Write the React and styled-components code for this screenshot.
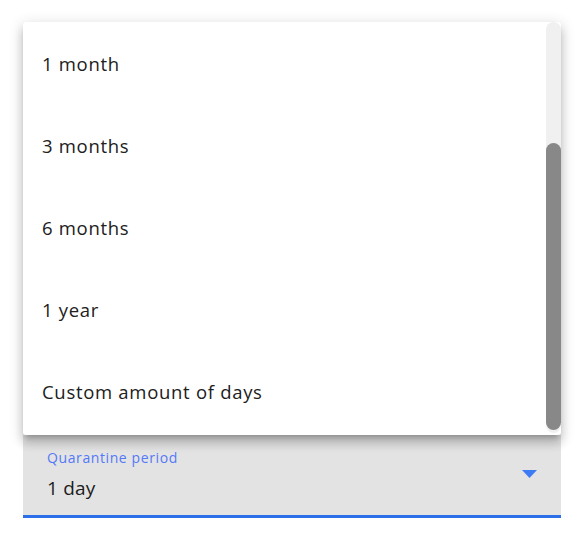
import React, { useState } from 'react'
import styled, { createGlobalStyle } from 'styled-components'

const GlobalStyle = createGlobalStyle`
  body {
    margin: 0;
    background: #ffffff;
    font-family: 'Open Sans', 'Noto Sans', sans-serif;
  }
`

const Page = styled.div`
  width: 580px;
  height: 533px;
  padding: 22px 0 0 23px;
  box-sizing: border-box;
`

const Select = styled.div`
  width: 538px;
  display: flex;
  flex-direction: column;
`

const Menu = styled.div`
  position: relative;
  z-index: 2;
  height: 413px;
  display: flex;
  background: #ffffff;
  border-radius: 3px;
  box-shadow: 0px 5px 5px -3px rgba(0, 0, 0, 0.2),
    0px 8px 10px 1px rgba(0, 0, 0, 0.14),
    0px 3px 14px 2px rgba(0, 0, 0, 0.12);
  overflow: hidden;
`

const List = styled.ul`
  flex: 1;
  margin: 0;
  padding: 0;
  list-style: none;
`

const Option = styled.li`
  height: 82px;
  display: flex;
  align-items: center;
  padding-left: 19px;
  font-size: 18.5px;
  letter-spacing: 0.7px;
  color: #202020;
  cursor: pointer;
`

const Track = styled.div`
  width: 15px;
  height: 411px;
  background: #f0f0f0;
  border-radius: 8px;
  display: flex;
  flex-direction: column;
`

const Thumb = styled.div`
  margin-top: 121px;
  height: 287px;
  background: #888888;
  border-radius: 8px;
`

const Field = styled.div`
  position: relative;
  z-index: 1;
  height: 80px;
  background: #e3e3e3;
  border-bottom: 3px solid #2d6fe8;
  display: flex;
  align-items: center;
  justify-content: space-between;
  padding: 0 24px 0 24px;
`

const FieldText = styled.div`
  display: flex;
  flex-direction: column;
  margin-top: -2px;
`

const Label = styled.span`
  font-size: 14px;
  letter-spacing: 0.6px;
  color: #5479f7;
  line-height: 18px;
`

const Value = styled.span`
  margin-top: 9px;
  font-size: 19px;
  letter-spacing: 0.2px;
  color: #1c1c1c;
  line-height: 24px;
`

const Arrow = styled.svg`
  width: 15px;
  height: 8px;
  margin-top: -3px;
`

const options = ['1 month', '3 months', '6 months', '1 year', 'Custom amount of days']

export default function App() {
  const [value, setValue] = useState('1 day')

  return (
    <>
      <GlobalStyle />
      <Page>
        <Select>
          <Menu>
            <List>
              {options.map((o) => (
                <Option key={o} onClick={() => setValue(o)}>
                  {o}
                </Option>
              ))}
            </List>
            <Track>
              <Thumb />
            </Track>
          </Menu>
          <Field>
            <FieldText>
              <Label>Quarantine period</Label>
              <Value>{value}</Value>
            </FieldText>
            <Arrow viewBox="0 0 15 8">
              <path d="M0 0 L15 0 L7.5 8 Z" fill="#3d7bf5" />
            </Arrow>
          </Field>
        </Select>
      </Page>
    </>
  )
}
